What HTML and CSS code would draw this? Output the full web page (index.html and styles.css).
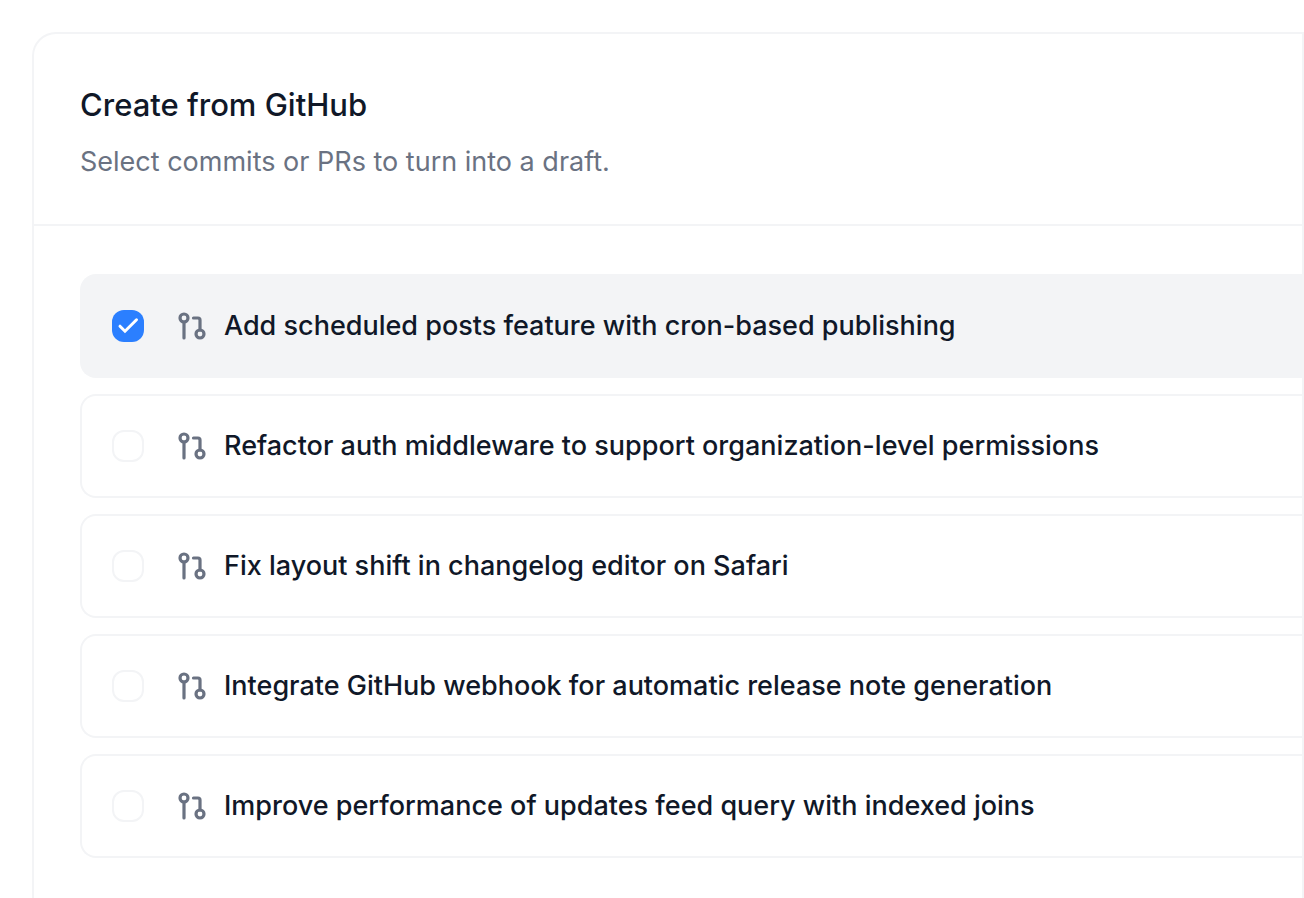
FILE: index.html
```html
<!DOCTYPE html>
<html lang="en">
<head>
<meta charset="utf-8">
<title>Create from GitHub</title>
<link rel="stylesheet" href="styles.css">
</head>
<body>
<svg class="defs" aria-hidden="true">
  <symbol id="pull-request" viewBox="0 0 32 32">
    <g fill="none" stroke="currentColor" stroke-width="3.2" stroke-linecap="round" stroke-linejoin="round">
      <circle cx="8" cy="8" r="4"/>
      <circle cx="24" cy="24" r="4"/>
      <path d="M8 12v16M17.5 8H22a2 2 0 0 1 2 2v10"/>
    </g>
  </symbol>
</svg>
<main class="card">
  <header class="card-header">
    <h1 class="title">Create from GitHub</h1>
    <p class="subtitle">Select commits or PRs to turn into a draft.</p>
  </header>
  <div class="list">
    <label class="row"><input class="check" type="checkbox" checked><svg class="icon" aria-hidden="true"><use href="#pull-request"/></svg><span>Add scheduled posts feature with cron-based publishing</span></label>
    <label class="row"><input class="check" type="checkbox"><svg class="icon" aria-hidden="true"><use href="#pull-request"/></svg><span>Refactor auth middleware to support organization-level permissions</span></label>
    <label class="row"><input class="check" type="checkbox"><svg class="icon" aria-hidden="true"><use href="#pull-request"/></svg><span>Fix layout shift in changelog editor on Safari</span></label>
    <label class="row"><input class="check" type="checkbox"><svg class="icon" aria-hidden="true"><use href="#pull-request"/></svg><span>Integrate GitHub webhook for automatic release note generation</span></label>
    <label class="row"><input class="check" type="checkbox"><svg class="icon" aria-hidden="true"><use href="#pull-request"/></svg><span>Improve performance of updates feed query with indexed joins</span></label>
  </div>
</main>
</body>
</html>
```
FILE: styles.css
```css
* { box-sizing: border-box; }
body { margin: 0; padding: 32px 0 0 32px; min-height: 100vh; display: flex; background: #fff; font-family: Inter, sans-serif; color: #101828; }
.defs { display: none; }
.card { flex: 1; border: 2px solid #f3f4f6; border-bottom: 0; border-top-left-radius: 24px; }
.card-header { padding: 46px 46px 42px; border-bottom: 2px solid #f3f4f6; }
.title { margin: 0 0 12px; font-size: 31px; line-height: 50px; font-weight: 500; }
.subtitle { margin: 0; font-size: 27px; line-height: 40px; color: #6a7282; }
.list { display: flex; flex-direction: column; gap: 16px; padding: 48px 0 40px 46px; }
.row { display: flex; align-items: center; min-height: 104px; padding: 0 30px; border: 2px solid #f3f4f6; border-right: 0; border-radius: 16px 0 0 16px; font-size: 27px; line-height: 40px; font-weight: 500; }
.row:has(:checked) { background: #f3f4f6; }
.check { appearance: none; flex: none; width: 32px; height: 32px; margin: 0 32px 0 0; border: 2px solid #f3f4f6; border-radius: 12px; background: #fff; }
.check:checked { border: 0; background: #2b7fff url("data:image/svg+xml,%3Csvg xmlns='http://www.w3.org/2000/svg' viewBox='0 0 32 32'%3E%3Cpath d='M8 16.2l5 5L24.5 9.8' fill='none' stroke='white' stroke-width='3' stroke-linecap='round'/%3E%3C/svg%3E") center / 32px 32px; }
.icon { flex: none; width: 32px; height: 32px; margin-right: 16px; color: #6a7282; }
```
